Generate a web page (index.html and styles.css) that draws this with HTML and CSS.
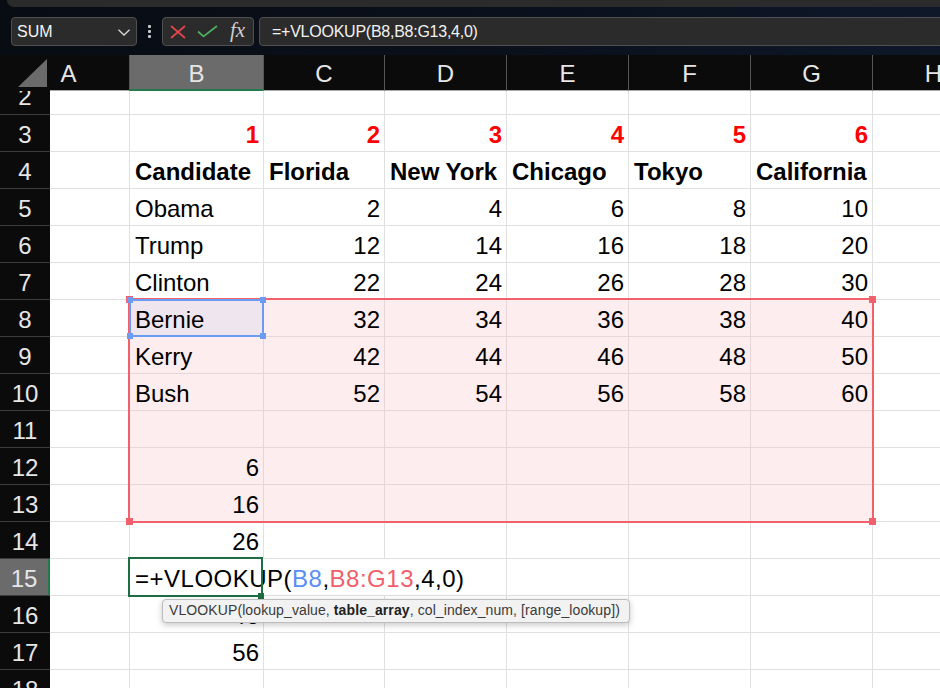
FILE: index.html
```html
<!DOCTYPE html>
<html>
<head>
<meta charset="utf-8">
<link rel="stylesheet" href="styles.css">
</head>
<body>
<div class="strip"></div>
<div class="toolbar">
  <div class="namebox"><span>SUM</span>
    <svg class="chev" width="12" height="7" viewBox="0 0 12 7"><polyline points="0.5,0.8 6,6 11.5,0.8" fill="none" stroke="#d8d8d8" stroke-width="1.3"/></svg>
  </div>
  <div class="dots"><i></i><i></i><i></i></div>
  <div class="iconbox">
    <svg width="16" height="14" viewBox="0 0 16 14"><path d="M1 1 L15 13 M15 1 L1 13" stroke="#e2474c" stroke-width="1.7" fill="none"/></svg>
    <svg class="ok" width="21" height="13" viewBox="0 0 21 13"><polyline points="1,6.5 6.5,11.5 20,1" fill="none" stroke="#4fb061" stroke-width="1.7"/></svg>
    <span class="fx">fx</span>
  </div>
  <div class="formula">=+VLOOKUP(B8,B8:G13,4,0)</div>
</div>
<div class="sheet">
  <div class="h corner"><svg width="50" height="35" viewBox="0 0 50 35"><polygon points="18,32 47,32 47,4" fill="#6b6b6b"/></svg></div>
  <div class="h ca">A</div><div class="h sel">B</div><div class="h">C</div><div class="h">D</div><div class="h">E</div><div class="h">F</div><div class="h">G</div><div class="h">H</div>

  <div class="rh r2">2</div><div class="c r2 a"></div><div class="c r2"></div><div class="c r2"></div><div class="c r2"></div><div class="c r2"></div><div class="c r2"></div><div class="c r2"></div><div class="c r2"></div>

  <div class="rh">3</div><div class="c a"></div><div class="c n red">1</div><div class="c n red">2</div><div class="c n red">3</div><div class="c n red">4</div><div class="c n red">5</div><div class="c n red">6</div><div class="c"></div>

  <div class="rh">4</div><div class="c a"></div><div class="c bold">Candidate</div><div class="c bold">Florida</div><div class="c bold">New York</div><div class="c bold">Chicago</div><div class="c bold">Tokyo</div><div class="c bold">California</div><div class="c"></div>

  <div class="rh">5</div><div class="c a"></div><div class="c">Obama</div><div class="c n">2</div><div class="c n">4</div><div class="c n">6</div><div class="c n">8</div><div class="c n">10</div><div class="c"></div>

  <div class="rh">6</div><div class="c a"></div><div class="c">Trump</div><div class="c n">12</div><div class="c n">14</div><div class="c n">16</div><div class="c n">18</div><div class="c n">20</div><div class="c"></div>

  <div class="rh">7</div><div class="c a"></div><div class="c">Clinton</div><div class="c n">22</div><div class="c n">24</div><div class="c n">26</div><div class="c n">28</div><div class="c n">30</div><div class="c"></div>

  <div class="rh">8</div><div class="c a"></div><div class="c lav">Bernie</div><div class="c pk n">32</div><div class="c pk n">34</div><div class="c pk n">36</div><div class="c pk n">38</div><div class="c pk n">40</div><div class="c"></div>

  <div class="rh">9</div><div class="c a"></div><div class="c pk">Kerry</div><div class="c pk n">42</div><div class="c pk n">44</div><div class="c pk n">46</div><div class="c pk n">48</div><div class="c pk n">50</div><div class="c"></div>

  <div class="rh">10</div><div class="c a"></div><div class="c pk">Bush</div><div class="c pk n">52</div><div class="c pk n">54</div><div class="c pk n">56</div><div class="c pk n">58</div><div class="c pk n">60</div><div class="c"></div>

  <div class="rh">11</div><div class="c a"></div><div class="c pk"></div><div class="c pk"></div><div class="c pk"></div><div class="c pk"></div><div class="c pk"></div><div class="c pk"></div><div class="c"></div>

  <div class="rh">12</div><div class="c a"></div><div class="c pk n">6</div><div class="c pk"></div><div class="c pk"></div><div class="c pk"></div><div class="c pk"></div><div class="c pk"></div><div class="c"></div>

  <div class="rh">13</div><div class="c a"></div><div class="c pk n">16</div><div class="c pk"></div><div class="c pk"></div><div class="c pk"></div><div class="c pk"></div><div class="c pk"></div><div class="c"></div>

  <div class="rh">14</div><div class="c a"></div><div class="c n">26</div><div class="c"></div><div class="c"></div><div class="c"></div><div class="c"></div><div class="c"></div><div class="c"></div>

  <div class="rh sel">15</div><div class="c a"></div><div class="c edit"><span class="edtext">=+VLOOKUP(<span class="refb">B8</span>,<span class="refr">B8:G13</span>,4,0)</span></div><div class="c"></div><div class="c"></div><div class="c"></div><div class="c"></div><div class="c"></div><div class="c"></div>

  <div class="rh">16</div><div class="c a"></div><div class="c n">46</div><div class="c"></div><div class="c"></div><div class="c"></div><div class="c"></div><div class="c"></div><div class="c"></div>

  <div class="rh">17</div><div class="c a"></div><div class="c n">56</div><div class="c"></div><div class="c"></div><div class="c"></div><div class="c"></div><div class="c"></div><div class="c"></div>

  <div class="rh">18</div><div class="c a"></div><div class="c"></div><div class="c"></div><div class="c"></div><div class="c"></div><div class="c"></div><div class="c"></div><div class="c"></div>

  <div class="range"><i class="hd tl"></i><i class="hd tr"></i><i class="hd bl"></i><i class="hd br"></i></div>
  <div class="b8"><i class="bh tl"></i><i class="bh tr"></i><i class="bh bl"></i><i class="bh br"></i></div>
  <div class="active"><i class="gh"></i></div>
  <div class="tip">VLOOKUP(lookup_value, <b>table_array</b>, col_index_num, [range_lookup])</div>
</div>
</body>
</html>
```
FILE: styles.css
```css
* { box-sizing: border-box; }
html, body { margin: 0; }
body {
  width: 940px;
  height: 688px;
  overflow: hidden;
  background: linear-gradient(90deg, #080c13 0%, #0a101c 55%, #0e1829 100%);
  font-family: "Liberation Sans", Arial, sans-serif;
}
.strip {
  height: 7px;
  margin-left: 7px;
  background: #2b2b2b;
  border-bottom-left-radius: 8px;
}
.toolbar {
  display: flex;
  align-items: center;
  height: 29px;
  margin-top: 10px;
  padding-left: 11px;
}
.namebox {
  flex: none;
  width: 126px;
  height: 29px;
  border: 1px solid #4f4f4f;
  border-radius: 4px;
  background: #2b2b2b;
  display: flex;
  align-items: center;
  justify-content: space-between;
  padding: 0 6px 0 5px;
  color: #f2f2f2;
  font-size: 16px;
}
.chev { margin-top: 2px; }
.dots {
  flex: none;
  width: 25px;
  display: flex;
  flex-direction: column;
  align-items: center;
  gap: 2px;
}
.dots i {
  display: block;
  width: 3px;
  height: 3px;
  background: #c8c8c8;
  border-radius: 1px;
}
.iconbox {
  flex: none;
  width: 92px;
  height: 29px;
  border: 1px solid #4f4f4f;
  border-radius: 4px;
  background: #2b2b2b;
  display: flex;
  align-items: center;
  padding-left: 7px;
}
.iconbox .ok { margin-left: 11px; }
.fx {
  margin-left: 12px;
  font-family: "Liberation Serif", "Times New Roman", serif;
  font-style: italic;
  font-size: 21px;
  color: #cfcfcf;
  line-height: 1;
  margin-top: -3px;
}
.formula {
  flex: none;
  width: 700px;
  margin-left: 5px;
  height: 29px;
  border: 1px solid #4f4f4f;
  border-radius: 4px;
  background: #2b2b2b;
  color: #f2f2f2;
  font-size: 16px;
  letter-spacing: -0.25px;
  padding-left: 12px;
  line-height: 27px;
}
.sheet {
  position: relative;
  margin-top: 9px;
  width: 994px;
  display: grid;
  grid-template-columns: 50px 79px 134px 121px 122px 122px 122px 122px 122px;
  grid-template-rows: 36px 24px;
  grid-auto-rows: 37px;
}
.h {
  background: #0b0b0b;
  color: #e6e6e6;
  font-size: 24px;
  text-align: center;
  line-height: 32px;
  padding-top: 3px;
  border-left: 1px solid #565656;
  border-bottom: 1px solid #a9a9a9;
}
.h.corner {
  border-left: 0;
  border-bottom-color: #0b0b0b;
  padding: 0;
  line-height: 0;
}
.h.ca {
  border-left: 0;
  padding-right: 42px;
}
.h.sel {
  background: #6b6b6b;
  border-bottom: 2px solid #23794b;
}
.rh {
  background: #0b0b0b;
  color: #e6e6e6;
  font-size: 24px;
  text-align: center;
  line-height: 32px;
  padding-top: 4px;
  border-bottom: 1px solid #3c3c3c;
  overflow: hidden;
}
.rh.r2 {
  padding-top: 0;
  line-height: 11px;
}
.rh.sel {
  background: #6b6b6b;
  border-right: 2px solid #23794b;
}
.c {
  background: #fff;
  border-left: 1px solid #e0e0e0;
  border-bottom: 1px solid #e0e0e0;
  padding: 4px 4px 0 5px;
  line-height: 32px;
  font-size: 24px;
  color: #000;
  white-space: nowrap;
  overflow: hidden;
}
.c.a { border-left: 0; }
.c.n { text-align: right; }
.c.bold { font-weight: bold; }
.c.red { color: #ff0000; font-weight: bold; }
.c.pk {
  background: #fdedee;
  border-color: #e6d6d8;
}
.c.lav {
  background: #efe5ef;
  border-color: #e6d6d8;
}
.c.edit {
  overflow: visible;
  z-index: 1;
  display: flex;
}
.edtext {
  flex: none;
  background: #fff;
  height: 36px;
  margin-top: -4px;
  padding: 4px 14px 0 0;
  line-height: 32px;
  letter-spacing: 0.5px;
}
.refb { color: #5a8ef6; }
.refr { color: #f0606b; }

.range {
  position: absolute;
  left: 128px;
  top: 243px;
  width: 746px;
  height: 225px;
  border: 2px solid #f2606b;
  z-index: 2;
}
.hd {
  position: absolute;
  width: 7px;
  height: 7px;
  background: #f2606b;
}
.hd.tl { left: -4px; top: -4px; }
.hd.tr { right: -4px; top: -4px; }
.hd.bl { left: -4px; bottom: -4px; }
.hd.br { right: -4px; bottom: -4px; }
.b8 {
  position: absolute;
  left: 129px;
  top: 244px;
  width: 135px;
  height: 38px;
  border: 2px solid #6b9cf2;
  z-index: 3;
}
.bh {
  position: absolute;
  width: 6px;
  height: 6px;
  background: #6b9cf2;
}
.bh.tl { left: -4px; top: -4px; }
.bh.tr { right: -4px; top: -4px; }
.bh.bl { left: -4px; bottom: -4px; }
.bh.br { right: -4px; bottom: -4px; }
.active {
  position: absolute;
  left: 128px;
  top: 502px;
  width: 135px;
  height: 40px;
  border: 2px solid #1f6e43;
  z-index: 3;
}
.gh {
  position: absolute;
  right: -3px;
  bottom: -4px;
  width: 6px;
  height: 6px;
  background: #1f6e43;
}
.tip {
  position: absolute;
  left: 162px;
  top: 544px;
  width: 468px;
  height: 24px;
  background: #f2f2f2;
  border: 1px solid #bdbdbd;
  border-radius: 4px;
  box-shadow: 0 2px 6px rgba(0,0,0,0.22);
  color: #3a3a3a;
  font-size: 14px;
  letter-spacing: 0.1px;
  line-height: 21px;
  padding: 0 6px;
  white-space: nowrap;
  z-index: 4;
}
.tip b { color: #222; }
```
